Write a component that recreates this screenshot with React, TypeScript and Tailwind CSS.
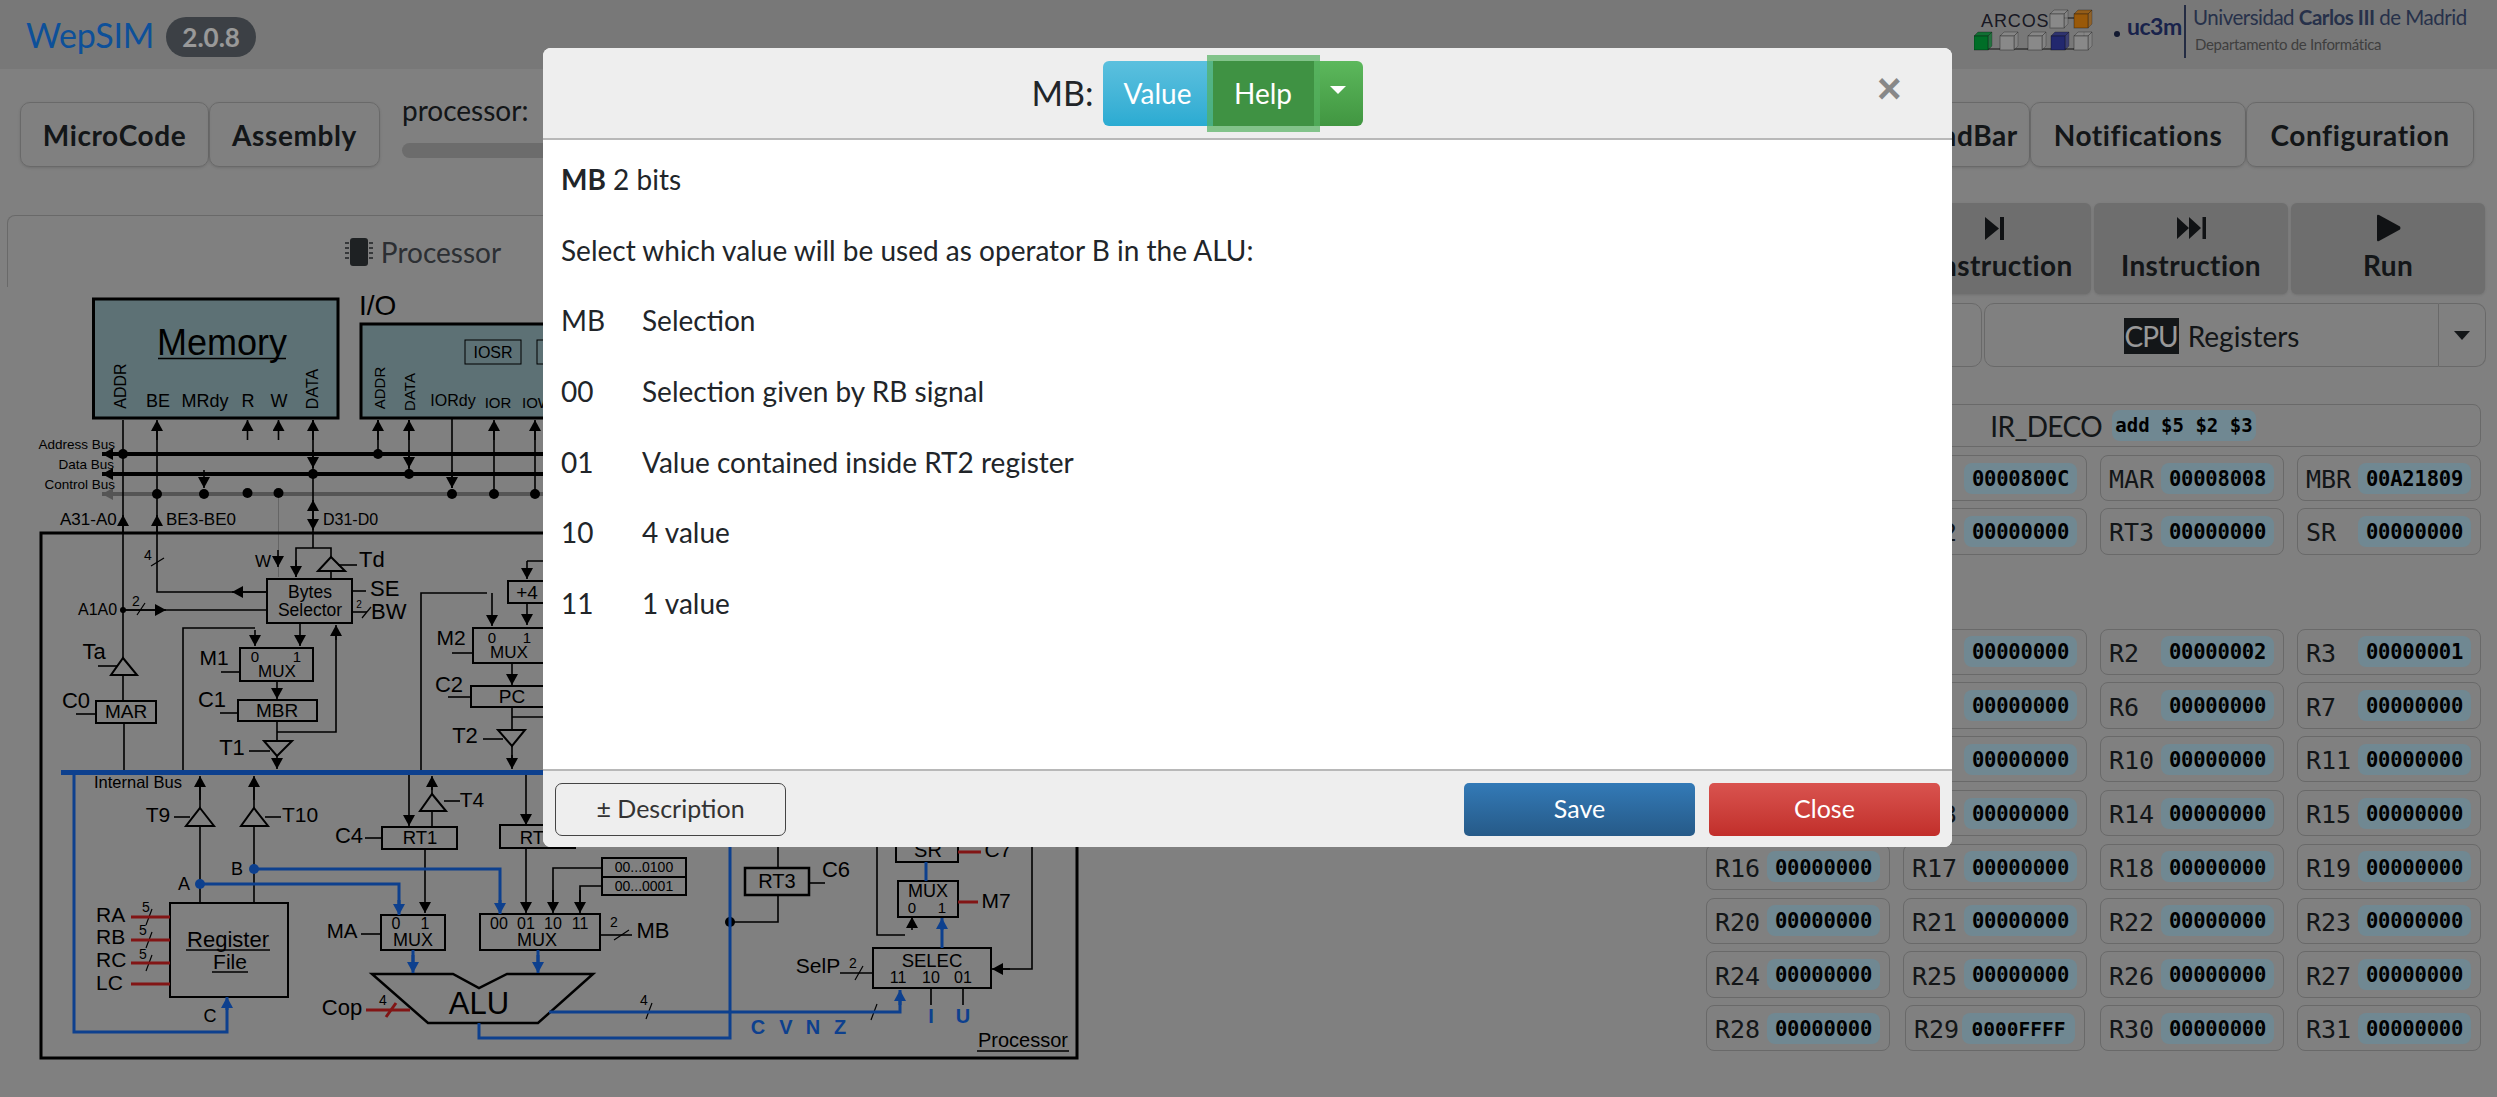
import type { ReactNode } from 'react';

const BLUE = '#176bed';
const RED = '#d92424';

function T({ x, y, s = 16, a = 'middle', c = '#000', b, children }: { x: number; y: number; s?: number; a?: 'start' | 'middle' | 'end'; c?: string; b?: boolean; children: ReactNode }) {
  return (
    <text x={x} y={y} fontSize={s} textAnchor={a} fill={c} fontWeight={b ? 700 : 400}>
      {children}
    </text>
  );
}

function Rot({ x, y, s = 16, children }: { x: number; y: number; s?: number; children: ReactNode }) {
  return (
    <text transform={`translate(${x} ${y}) rotate(-90)`} fontSize={s} textAnchor="middle">
      {children}
    </text>
  );
}

function Box({ x, y, w, h, sw = 2 }: { x: number; y: number; w: number; h: number; sw?: number }) {
  return <rect x={x} y={y} width={w} height={h} fill="none" stroke="#000" strokeWidth={sw} />;
}

// plain black wires
const wires = [
  'M123 420V658', 'M123 675V701', 'M124 723V771', 'M267 592H157V425', 'M313 420V548',
  'M296 577V548H331V557', 'M331 571V579', 'M338 565H357', 'M352 591H366', 'M352 612H367',
  'M123 610H267', 'M98 666H118', 'M76 714H96', 'M221 672H240', 'M220 713H238', 'M249 751H270',
  'M277 721V741', 'M277 732H336V630', 'M183 772V628H255', 'M378 420V454', 'M409 420V474',
  'M452 418V488', 'M494 494V425', 'M535 494V425', 'M421 772V593H487', 'M527 561H560',
  'M452 653H473', 'M448 697H471', 'M512 707V730', 'M512 717H560', 'M483 739H503', 'M512 746V765',
  'M200 785V808', 'M200 826V903', 'M254 785V808', 'M254 826V903', 'M174 817H190', 'M265 817H281',
  'M365 838H382', 'M432 785V794', 'M432 811V827', 'M444 801H460', 'M361 934H381', 'M600 935H632',
  'M602 868H553V905', 'M602 886H580V905', 'M778 847V868', 'M778 895V922H730', 'M809 883H825',
  'M877 847V935H905', 'M1032 847V969H1000', 'M840 973H873', 'M931 988V1005', 'M963 988V1005',
];

const arrows = [
  'M123 533V515', 'M157 533V515', 'M157 440V420', 'M204 470V488', 'M247.5 440V420', 'M278.5 440V420',
  'M313 440V420', 'M313 450V468', 'M313 515V500', 'M313 515V530', 'M278 550V567', 'M296 560V577',
  'M255 630V646', 'M300 623V646', 'M277 681V699', 'M336 640V625', 'M277 756V769', 'M267 592H232',
  'M123 610H166', 'M378 440V420', 'M409 440V420', 'M409 450V468', 'M452 470V488', 'M494 440V420',
  'M535 440V420', 'M492 593V626', 'M527 561V579', 'M527 603V625', 'M512 663V685', 'M512 755V769',
  'M200 800V776', 'M254 800V776', 'M409 773V826', 'M432 790V776', 'M425 849V913', 'M526 773V825',
  'M526 848V913', 'M553 890V913', 'M580 890V913', 'M912 930V917', 'M1010 969H992',
];

const blueWires = [
  'M74 773V1032H227V1005', 'M200 884H399V905', 'M254 869H500V905', 'M413 950V965', 'M538 950V965',
  'M549 1012H900V995', 'M479 1023V1038H730V847', 'M926 862V881', 'M942 948V925',
];

const blueArrows = ['M227 1010V997', 'M399 900V915', 'M500 900V914', 'M413 955V973', 'M538 955V973', 'M900 1005V990', 'M942 930V918'];

const slashes = [
  [151, 566, 164, 558], [137, 615, 145, 603], [362, 618, 371, 607], [146, 925, 152, 909], [146, 948, 152, 932],
  [146, 971, 152, 955], [614, 940, 629, 930], [646, 1019, 652, 1003], [871, 1020, 877, 1004], [855, 980, 863, 966],
];

const redWires = ['M131 917H170', 'M131 940H170', 'M131 963H170', 'M131 984H170', 'M366 1010H410', 'M386 1017L396 1003', 'M958 852H981', 'M958 902H978'];

function Diagram() {
  return (
    <svg viewBox="0 287 1090 810" className="block h-[810px] w-[1090px] font-['Liberation_Sans',sans-serif]">
      <defs>
        <marker id="ah" markerUnits="userSpaceOnUse" markerWidth="12" markerHeight="12" refX="11" refY="6" orient="auto">
          <path d="M0 0L11 6L0 12Z" fill="#000" />
        </marker>
        <marker id="ab" markerUnits="userSpaceOnUse" markerWidth="12" markerHeight="12" refX="11" refY="6" orient="auto">
          <path d="M0 0L11 6L0 12Z" fill={BLUE} />
        </marker>
        <marker id="ag" markerUnits="userSpaceOnUse" markerWidth="12" markerHeight="12" refX="11" refY="6" orient="auto">
          <path d="M0 0L11 6L0 12Z" fill="#8e8e8e" />
        </marker>
      </defs>

      {/* memory and io */}
      <rect x="93.5" y="299" width="244.5" height="119" fill="#9bbcc3" stroke="#000" strokeWidth="3" />
      <T x={222} y={355} s={36}>Memory</T>
      <path d="M158 358.5H286" stroke="#000" strokeWidth="1.5" />
      <Rot x={126} y={386}>ADDR</Rot>
      <T x={158} y={407} s={18}>BE</T>
      <T x={205} y={407} s={18}>MRdy</T>
      <T x={248} y={407} s={18}>R</T>
      <T x={279} y={407} s={18}>W</T>
      <Rot x={318} y={389}>DATA</Rot>
      <T x={359} y={315} s={28} a="start">I/O</T>
      <rect x="361" y="324" width="300" height="94" fill="#9bbcc3" stroke="#000" strokeWidth="3" />
      <rect x="465" y="340" width="56" height="24" fill="none" stroke="#000" />
      <rect x="537" y="340" width="56" height="24" fill="none" stroke="#000" />
      <T x={493} y={358} s={16}>IOSR</T>
      <Rot x={385} y={388} s={15}>ADDR</Rot>
      <Rot x={415} y={392} s={15}>DATA</Rot>
      <T x={453} y={406} s={16}>IORdy</T>
      <T x={498} y={408} s={15}>IOR</T>
      <T x={522} y={408} s={15} a="start">IOW</T>

      {/* buses */}
      <path d="M600 454H102" stroke="#000" strokeWidth="4" markerEnd="url(#ah)" />
      <path d="M600 474H102" stroke="#000" strokeWidth="4" markerEnd="url(#ah)" />
      <path d="M600 494H102" stroke="#8e8e8e" strokeWidth="4" markerEnd="url(#ag)" />
      <T x={115} y={449} s={13.5} a="end">Address Bus</T>
      <T x={114} y={469} s={13.5} a="end">Data Bus</T>
      <T x={115} y={489} s={13.5} a="end">Control Bus</T>
      <path d="M278.5 493V577" stroke="#a8a8a8" strokeWidth="1" />

      <T x={60} y={525} a="start" s={17}>A31-A0</T>
      <T x={166} y={525} a="start" s={17}>BE3-BE0</T>
      <T x={323} y={525} a="start" s={16}>D31-D0</T>

      {/* processor frame */}
      <rect x="41" y="533" width="1036" height="525" fill="none" stroke="#000" strokeWidth="3" />

      {wires.map((d) => (
        <path key={d} d={d} fill="none" stroke="#000" strokeWidth="1.6" />
      ))}
      {arrows.map((d) => (
        <path key={d} d={d} fill="none" stroke="#000" strokeWidth="1.6" markerEnd="url(#ah)" />
      ))}
      {slashes.map(([a, b, c, d]) => (
        <path key={`${a}-${b}`} d={`M${a} ${b}L${c} ${d}`} stroke="#000" strokeWidth="1.2" />
      ))}

      {[[123, 454], [378, 454], [313, 474], [409, 474], [157, 494], [204, 494], [247.5, 493], [278.5, 493], [452, 494], [494, 494], [535, 494]].map(([x, y]) => (
        <circle key={`${x}-${y}`} cx={x} cy={y} r="5" fill="#000" />
      ))}
      <circle cx="123" cy="610" r="3" fill="#000" />
      <circle cx="730" cy="922" r="5" fill="#000" />

      {/* tristate buffers */}
      <path d="M331 557L345 571H318Z" fill="none" stroke="#000" strokeWidth="2" />
      <path d="M123 658L137 675H111Z" fill="none" stroke="#000" strokeWidth="2" />
      <path d="M264 741H292L277 756Z" fill="none" stroke="#000" strokeWidth="2" />
      <path d="M498 730H525L512 746Z" fill="none" stroke="#000" strokeWidth="2" />
      <path d="M200 808L214 826H186Z" fill="none" stroke="#000" strokeWidth="2" />
      <path d="M254 808L268 826H241Z" fill="none" stroke="#000" strokeWidth="2" />
      <path d="M432 794L446 811H420Z" fill="none" stroke="#000" strokeWidth="2" />

      {/* upper left boxes */}
      <T x={148} y={560} s={14}>4</T>
      <T x={136} y={606} s={14}>2</T>
      <T x={359} y={608} s={10}>2</T>
      <T x={255} y={567} a="start" s={17}>W</T>
      <T x={359} y={567} a="start" s={22}>Td</T>
      <T x={370} y={596} a="start" s={22}>SE</T>
      <T x={371} y={619} a="start" s={22}>BW</T>
      <T x={78} y={615} a="start" s={16}>A1A0</T>
      <Box x={267} y={579} w={85} h={44} />
      <T x={310} y={598} s={17.5}>Bytes</T>
      <T x={310} y={616} s={17.5}>Selector</T>
      <Box x={240} y={648} w={73} h={33} />
      <T x={255} y={662} s={15}>0</T>
      <T x={297} y={662} s={15}>1</T>
      <T x={277} y={677} s={17}>MUX</T>
      <T x={214} y={665} s={21}>M1</T>
      <T x={212} y={707} s={22}>C1</T>
      <Box x={238} y={700} w={79} h={21} />
      <T x={277} y={717} s={19}>MBR</T>
      <T x={232} y={755} s={22}>T1</T>
      <T x={94} y={659} s={22}>Ta</T>
      <T x={76} y={708} s={22}>C0</T>
      <Box x={96} y={701} w={60} h={22} />
      <T x={126} y={718} s={19}>MAR</T>

      <Box x={508} y={581} w={60} h={22} />
      <T x={527} y={599} s={19}>+4</T>
      <Box x={473} y={628} w={100} h={35} />
      <T x={492} y={643} s={15}>0</T>
      <T x={527} y={643} s={15}>1</T>
      <T x={509} y={658} s={17}>MUX</T>
      <T x={451} y={645} s={21}>M2</T>
      <T x={449} y={692} s={22}>C2</T>
      <Box x={471} y={686} w={90} h={21} />
      <T x={512} y={703} s={19}>PC</T>
      <T x={465} y={743} s={22}>T2</T>

      {/* internal bus */}
      <path d="M61 772.5H560" stroke={BLUE} strokeWidth="5" />
      <T x={94} y={788} a="start" s={16.5}>Internal Bus</T>
      <T x={158} y={822} s={21}>T9</T>
      <T x={300} y={822} s={21}>T10</T>
      <T x={472} y={807} s={21}>T4</T>
      <T x={184} y={890} s={18}>A</T>
      <T x={237} y={875} s={18}>B</T>

      {/* register file */}
      <Box x={170} y={903} w={118} h={94} />
      <T x={228} y={947} s={22}>Register</T>
      <path d="M186 950H270" stroke="#000" strokeWidth="1.5" />
      <T x={230} y={969} s={21}>File</T>
      <path d="M212 972H248" stroke="#000" strokeWidth="1.5" />
      <T x={96} y={922} a="start" s={21}>RA</T>
      <T x={96} y={944} a="start" s={21}>RB</T>
      <T x={96} y={967} a="start" s={21}>RC</T>
      <T x={96} y={990} a="start" s={21}>LC</T>
      <T x={146} y={912} s={14}>5</T>
      <T x={143} y={935} s={14}>5</T>
      <T x={143} y={959} s={14}>5</T>
      <T x={210} y={1022} s={18}>C</T>

      {/* rt boxes and muxes */}
      <Box x={382} y={827} w={75} h={22} />
      <T x={420} y={844} s={18.5}>RT1</T>
      <T x={349} y={843} s={22}>C4</T>
      <Box x={500} y={825} w={75} h={23} />
      <T x={537} y={844} s={18.5}>RT2</T>
      <Box x={381} y={915} w={64} h={35} />
      <T x={396} y={929} s={16}>0</T>
      <T x={425} y={929} s={16}>1</T>
      <T x={413} y={946} s={18}>MUX</T>
      <T x={342} y={938} s={20.5}>MA</T>
      <Box x={480} y={914} w={120} h={36} />
      <T x={499} y={929} s={16}>00</T>
      <T x={526} y={929} s={16}>01</T>
      <T x={553} y={929} s={16}>10</T>
      <T x={580} y={929} s={16}>11</T>
      <T x={537} y={946} s={18}>MUX</T>
      <T x={614} y={927} s={14}>2</T>
      <T x={653} y={938} s={22}>MB</T>
      <Box x={602} y={858} w={84} h={19} />
      <Box x={602} y={877} w={84} h={18} />
      <T x={644} y={872} s={14}>00...0100</T>
      <T x={644} y={891} s={14}>00...0001</T>

      {/* alu */}
      <path d="M372 974H453L479 988L507 974H593L538 1023H428Z" fill="none" stroke="#000" strokeWidth="2.5" />
      <T x={479} y={1014} s={31}>ALU</T>
      <T x={342} y={1015} s={22}>Cop</T>
      <T x={383} y={1005} s={14}>4</T>
      <T x={644} y={1005} s={14}>4</T>

      {/* right side of the datapath */}
      <Box x={745} y={868} w={64} h={27} sw={2.5} />
      <T x={777} y={888} s={20}>RT3</T>
      <T x={836} y={877} s={22}>C6</T>
      <Box x={896} y={840} w={62} h={22} />
      <T x={928} y={857} s={20}>SR</T>
      <T x={998} y={857} s={21}>C7</T>
      <Box x={898} y={881} w={60} h={36} />
      <T x={928} y={897} s={18}>MUX</T>
      <T x={912} y={913} s={15}>0</T>
      <T x={942} y={913} s={15}>1</T>
      <T x={996} y={908} s={21}>M7</T>
      <Box x={873} y={948} w={118} h={40} />
      <T x={932} y={967} s={18.5}>SELEC</T>
      <T x={898} y={983} s={16}>11</T>
      <T x={931} y={983} s={16}>10</T>
      <T x={963} y={983} s={16}>01</T>
      <T x={818} y={973} s={21}>SelP</T>
      <T x={853} y={968} s={14}>2</T>

      {blueWires.map((d) => (
        <path key={d} d={d} fill="none" stroke={BLUE} strokeWidth="3" />
      ))}
      {blueArrows.map((d) => (
        <path key={d} d={d} fill="none" stroke={BLUE} strokeWidth="3" markerEnd="url(#ab)" />
      ))}
      <circle cx="200" cy="884" r="5" fill={BLUE} />
      <circle cx="254" cy="869" r="5" fill={BLUE} />
      {redWires.map((d) => (
        <path key={d} d={d} fill="none" stroke={RED} strokeWidth="3" />
      ))}

      <T x={758} y={1034} s={20} c={BLUE} b>C</T>
      <T x={786} y={1034} s={20} c={BLUE} b>V</T>
      <T x={813} y={1034} s={20} c={BLUE} b>N</T>
      <T x={840} y={1034} s={20} c={BLUE} b>Z</T>
      <T x={931} y={1023} s={20} c={BLUE} b>I</T>
      <T x={963} y={1023} s={20} c={BLUE} b>U</T>
      <T x={1023} y={1047} s={20}>Processor</T>
      <path d="M977 1051H1069" stroke="#000" strokeWidth="1.5" />
    </svg>
  );
}

function Cube({ x, y, c }: { x: number; y: number; c: string }) {
  return (
    <g stroke="#00000066" strokeWidth="0.8">
      <path d={`M${x + 4} ${y}H${x + 18}L${x + 14} ${y + 4}H${x}Z`} fill={c} opacity="0.85" />
      <path d={`M${x + 14} ${y + 4}L${x + 18} ${y}V${y + 14}L${x + 14} ${y + 18}Z`} fill={c} opacity="0.7" />
      <rect x={x} y={y + 4} width={14} height={14} fill={c} />
    </g>
  );
}

function Logos() {
  return (
    <div className="flex items-start">
      <svg viewBox="0 0 120 50" className="mt-[8px] h-[50px] w-[120px] font-['Liberation_Sans',sans-serif]">
        <path d="M10 41H110M90 10H104M110 24V32" stroke="#555" strokeWidth="1.5" fill="none" />
        <text x="7" y="19" fontSize="18" letterSpacing="0.9" fill="#2a2a3a">ARCOS</text>
        <Cube x={76} y={2} c="#e4e4e4" />
        <Cube x={100} y={2} c="#ff9410" />
        <Cube x={0} y={24} c="#00b742" />
        <Cube x={26} y={24} c="#e4e4e4" />
        <Cube x={54} y={24} c="#e4e4e4" />
        <Cube x={77} y={24} c="#3a43b7" />
        <Cube x={100} y={24} c="#e4e4e4" />
      </svg>
      <div className="ml-[20px] mt-[10px] flex h-[30px] items-end text-[23px] font-bold leading-[28px] tracking-[-0.5px] text-[#2a3a7d]">
        <span className="mb-[3px] mr-[7px] h-[6px] w-[6px] rounded-full bg-[#1f2a50]" />
        <span className="w-[47px]">uc3m</span>
      </div>
      <div className="ml-[10px] mr-[7px] mt-[5px] h-[53px] w-[2px] bg-[#3d4a70]" />
      <div className="mt-[7px] w-[271px] whitespace-nowrap leading-none">
        <div className="text-[20.5px] tracking-[-0.5px] text-[#42537c]">
          Universidad <span className="font-bold">Carlos III</span> de Madrid
        </div>
        <div className="ml-[2px] mt-[9px] text-[15px] tracking-[-0.3px] text-[#6a6a6a]">Departamento de Informática</div>
      </div>
    </div>
  );
}

function ToolButton({ w, children }: { w: string; children: ReactNode }) {
  return (
    <div className={`flex h-[65px] items-center justify-center rounded-[10px] border border-[#b0b0b0] font-bold tracking-[0.6px] shadow-sm ${w}`}>
      {children}
    </div>
  );
}

function StepButton({ icon, children }: { icon: ReactNode; children: ReactNode }) {
  return (
    <div className="flex h-[91px] w-[194px] flex-col items-center rounded-md bg-[#b7b7b7] pt-[10px] font-bold leading-[36px] tracking-[0.4px] shadow-sm">
      <div className="flex h-[30px] items-center">{icon}</div>
      <div className="mt-[4px]">{children}</div>
    </div>
  );
}

function Reg({ name, value, small }: { name: string; value: string; small?: boolean }) {
  return (
    <div className={`flex h-[46.3px] items-center justify-between rounded-lg border border-[#b0b0b0] pl-[8px] pr-[9px] ${small ? 'mx-[2px]' : ''}`}>
      <span className="pt-[3px] text-[25px] leading-none">{name}</span>
      <span className={`flex h-[31px] w-[113px] items-center justify-center rounded-lg bg-[#bbe3f3] pt-[2px] font-bold text-black ${small ? 'text-[19.5px]' : 'text-[20.5px] tracking-[-0.2px]'}`}>
        {value}
      </span>
    </div>
  );
}

const regs: Record<string, string> = { R2: '00000002', R3: '00000001', R29: '0000FFFF' };

function Registers() {
  const special = [
    ['IR', '00A21809'], ['PC', '0000800C'], ['MAR', '00008008'], ['MBR', '00A21809'],
    ['RT1', '00000000'], ['RT2', '00000000'], ['RT3', '00000000'], ['SR', '00000000'],
  ];
  return (
    <div className="ml-[6px] mr-[16px] font-['DejaVu_Sans_Mono',monospace]">
      <div className="mt-[8px] grid grid-cols-4 gap-x-[13px] gap-y-[7px]">
        {special.map(([n, v]) => (
          <Reg key={n} name={n} value={v} />
        ))}
      </div>
      <div className="mt-[74px] grid grid-cols-4 gap-x-[13px] gap-y-[7.5px]">
        {Array.from({ length: 32 }, (_, i) => `R${i}`).map((n) => (
          <Reg key={n} name={n} value={regs[n] ?? '00000000'} small={n === 'R29'} />
        ))}
      </div>
    </div>
  );
}

function Modal() {
  const rows = [
    ['MB', 'Selection'],
    ['00', 'Selection given by RB signal'],
    ['01', 'Value contained inside RT2 register'],
    ['10', '4 value'],
    ['11', '1 value'],
  ];
  return (
    <div className="absolute left-[543px] top-[48px] flex h-[799px] w-[1409px] flex-col overflow-hidden rounded-[8px] bg-white">
      <div className="flex h-[92px] shrink-0 items-center border-b-2 border-[#b8b8b8] bg-[#eeeeee]">
        <div className="flex flex-1 items-center justify-center gap-[9px]">
          <span className="text-[34px] leading-none">MB:</span>
          <div className="flex h-[65px] text-[28px] text-white">
            <div className="flex w-[110px] items-center justify-center rounded-l-[6px] bg-linear-to-b from-[#5bc0de] to-[#2aabd2]">Value</div>
            <div className="relative z-10 flex w-[101px] items-center justify-center bg-[#3f9243] ring-[6px] ring-[#54b060]/70">Help</div>
            <div className="flex w-[49px] items-center justify-center rounded-r-[6px] bg-linear-to-b from-[#5cb85c] to-[#419641]">
              <span className="mb-[6px] h-0 w-0 border-x-[8px] border-t-[8px] border-x-transparent border-t-white" />
            </div>
          </div>
        </div>
        <div className="mb-[8px] w-[101px] pl-[26px] font-['Liberation_Sans',sans-serif] text-[42px] font-bold leading-none text-[#888888]">×</div>
      </div>
      <div className="flex-1 px-[18px] pt-[18px] text-[28px] leading-[42px] text-[#212529]">
        <p className="mb-[28.7px]"><b>MB</b> 2 bits</p>
        <p className="mb-[28.7px]">Select which value will be used as operator B in the ALU:</p>
        {rows.map(([a, b]) => (
          <div key={a} className="mb-[28.7px] grid grid-cols-[81px_1fr]">
            <span>{a}</span>
            <span>{b}</span>
          </div>
        ))}
      </div>
      <div className="flex h-[78px] shrink-0 items-center border-t-2 border-[#b8b8b8] bg-[#eeeeee] px-[12px] text-[25px]">
        <div className="flex h-[53px] w-[231px] items-center justify-center rounded-[7px] border border-[#444444] text-[#333333]">± Description</div>
        <div className="ml-auto flex h-[53px] w-[231px] items-center justify-center rounded-[5px] bg-linear-to-b from-[#337ab7] to-[#265a88] text-white">Save</div>
        <div className="ml-[14px] flex h-[53px] w-[231px] items-center justify-center rounded-[5px] bg-linear-to-b from-[#d9534f] to-[#c12e2a] text-white">Close</div>
      </div>
    </div>
  );
}

export default function App() {
  return (
    <div className="relative h-[1097px] w-[2497px] overflow-hidden bg-[#d5d5d5] font-[Lato,sans-serif] text-[28px] text-[#212529]">
      <header className="flex h-[69px] items-start justify-between bg-[#c8c8c8] pl-[26px] pr-[33px]">
        <div className="flex items-start">
          <span className="mt-[14px] text-[34px] leading-[42px] tracking-[-0.2px] text-[#1685ff]">WepSIM</span>
          <span className="ml-[12px] mt-[17px] flex h-[40px] w-[90px] items-center justify-center rounded-full bg-[#646c74] text-[26px] font-bold text-white">2.0.8</span>
        </div>
        <Logos />
      </header>

      <div className="flex">
        <div className="w-[1700px] shrink-0">
          <div className="ml-[20px] mt-[33px] flex">
            <ToolButton w="w-[189px]">MicroCode</ToolButton>
            <ToolButton w="w-[171px]">Assembly</ToolButton>
            <div className="-mt-[10px] ml-[22px]">
              <div className="leading-[36px]">processor:</div>
              <div className="mt-[15px] h-[15px] w-[400px] rounded-full bg-[#b4b4b4]" />
            </div>
          </div>
          <div className="ml-[7px] mt-[48px] flex h-[72px] w-[832px] items-center justify-center gap-[8px] rounded-t-lg border border-b-0 border-[#b0b0b0] text-[#4a4f55]">
            <svg viewBox="0 0 28 28" className="h-[28px] w-[28px]">
              <rect x="5" y="0" width="18" height="28" rx="3" fill="#33373b" />
              <path d="M0 5H4M0 10H4M0 15H4M0 20H4M24 5H28M24 10H28M24 15H28M24 20H28" stroke="#33373b" strokeWidth="1.5" />
            </svg>
            Processor
          </div>
          <Diagram />
        </div>

        <div className="flex-1">
          <div className="mr-[23px] mt-[33px] flex justify-end">
            <ToolButton w="w-[200px]">CommandBar</ToolButton>
            <ToolButton w="w-[216px]">Notifications</ToolButton>
            <ToolButton w="w-[228px]">Configuration</ToolButton>
          </div>
          <div className="mr-[12px] mt-[36px] flex justify-end gap-[3px]">
            <StepButton icon={<svg viewBox="0 0 19 25" className="h-[25px] w-[19px]"><path d="M0 1L14 12.5L0 24Z M15 1H19V24H15Z" fill="#1c1f22" /></svg>}>μInstruction</StepButton>
            <StepButton icon={<svg viewBox="0 0 29 22" className="h-[22px] w-[29px]"><path d="M0 0L12 11L0 22Z M12 0L24 11L12 22Z M25.5 0H29V22H25.5Z" fill="#1c1f22" /></svg>}>Instruction</StepButton>
            <StepButton icon={<svg viewBox="0 0 25 28" className="h-[28px] w-[25px]"><path d="M1 2Q1 0 3 1L24 12.5Q25 14 24 15.5L3 27Q1 28 1 26Z" fill="#1c1f22" /></svg>}>Run</StepButton>
          </div>
          <div className="mr-[11px] mt-[9px] flex h-[64px] justify-end">
            <div className="mr-[2px] w-[250px] rounded-[10px] border border-[#b0b0b0]" />
            <div className="flex w-[455px] items-center justify-center rounded-l-[10px] border border-[#b0b0b0] pt-[2px]">
              <span className="mr-[9px] bg-[#212529] px-[1px] leading-[36px] tracking-[-1px] text-white">CPU</span>
              Registers
            </div>
            <div className="flex w-[47px] items-center justify-center rounded-r-[10px] border border-l-0 border-[#b0b0b0]">
              <span className="h-0 w-0 border-x-[8px] border-t-[9px] border-x-transparent border-t-[#212529]" />
            </div>
          </div>
          <div className="ml-[6px] mr-[16px] mt-[37px] flex h-[43px] items-center justify-end rounded-lg border border-[#b0b0b0] pr-[224px] tracking-[-0.6px]">
            IR_DECO
            <span className="ml-[10px] flex h-[31px] w-[144px] items-center justify-center rounded-lg bg-[#bbe3f3] font-['DejaVu_Sans_Mono',monospace] text-[19px] font-bold tracking-normal text-black">add $5 $2 $3</span>
          </div>
          <Registers />
        </div>
      </div>

      <div className="absolute inset-0 bg-black/40" />
      <Modal />
    </div>
  );
}
